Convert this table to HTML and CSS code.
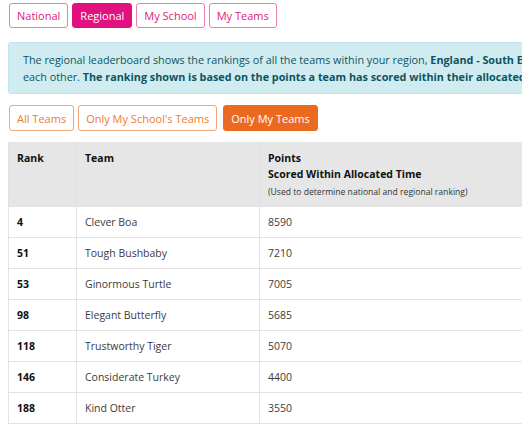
FILE: index.html
```html
<!DOCTYPE html>
<html lang="en">
<head>
<meta charset="utf-8">
<title>Leaderboard</title>
<link rel="stylesheet" href="styles.css">
</head>
<body>
<div class="page">
  <div class="tabs">
    <button class="btn pink">National</button>
    <button class="btn pink active">Regional</button>
    <button class="btn pink">My School</button>
    <button class="btn pink">My Teams</button>
  </div>
  <div class="alert">
    The regional leaderboard shows the rankings of all the teams within your region, <b>England - South East</b>, compared with<br>
    each other. <b>The ranking shown is based on the points a team has scored within their allocated time.</b>
  </div>
  <div class="filters">
    <button class="btn orange">All Teams</button>
    <button class="btn orange">Only My School's Teams</button>
    <button class="btn orange active">Only My Teams</button>
  </div>
  <table class="board">
    <thead>
      <tr>
        <th class="c-rank">Rank</th>
        <th class="c-team">Team</th>
        <th class="c-points">
          <div>Points</div>
          <div>Scored Within Allocated Time</div>
          <div class="note">(Used to determine national and regional ranking)</div>
        </th>
      </tr>
    </thead>
    <tbody>
      <tr><td class="rank">4</td><td>Clever Boa</td><td>8590</td></tr>
      <tr><td class="rank">51</td><td>Tough Bushbaby</td><td>7210</td></tr>
      <tr><td class="rank">53</td><td>Ginormous Turtle</td><td>7005</td></tr>
      <tr><td class="rank">98</td><td>Elegant Butterfly</td><td>5685</td></tr>
      <tr><td class="rank">118</td><td>Trustworthy Tiger</td><td>5070</td></tr>
      <tr><td class="rank">146</td><td>Considerate Turkey</td><td>4400</td></tr>
      <tr><td class="rank">188</td><td>Kind Otter</td><td>3550</td></tr>
    </tbody>
  </table>
</div>
</body>
</html>
```

FILE: styles.css
```css
html, body {
  margin: 0;
  padding: 0;
  overflow: hidden;
  background: #fff;
}
body {
  font-family: "Open Sans", "Noto Sans", sans-serif;
  font-size: 11px;
  color: #212529;
}
.page {
  width: 760px;
  padding: 3px 0 0 8px;
}
.tabs, .filters {
  display: flex;
  gap: 4px;
  padding-left: 1px;
}
.btn {
  font-family: inherit;
  font-size: 11px;
  height: 25px;
  padding: 0 7px;
  background: #fff;
  border-radius: 3px;
  border: 1px solid;
  line-height: 23px;
  cursor: pointer;
}
.btn.pink {
  color: #e0187f;
  border-color: #ee7ab5;
}
.btn.pink.active {
  background: #e2117f;
  border-color: #e2117f;
  color: #fff;
}
.btn.orange {
  color: #ef7a36;
  border-color: #f3a57a;
  height: 26px;
}
.btn.orange.active {
  background: #ec6a20;
  border-color: #ec6a20;
  color: #fff;
  margin-left: 2px;
}
.alert {
  margin-top: 14px;
  background: #d1ecf1;
  border: 1px solid #bee5eb;
  border-radius: 3px;
  color: #0c5460;
  padding: 8px 14px;
  line-height: 17px;
  font-size: 10.8px;
  white-space: nowrap;
}
.alert b {
  font-weight: 700;
}
.filters {
  margin-top: 11px;
}
.board {
  margin-top: 11px;
  border-collapse: collapse;
  width: 760px;
  font-size: 10.5px;
}
.board th, .board td {
  border: 1px solid #e2e2e2;
  text-align: left;
  vertical-align: top;
  padding: 7px 8px;
  line-height: 16px;
}
.board thead th {
  background: #e6e6e6;
  font-weight: 700;
  color: #111;
  padding-top: 8px;
  padding-bottom: 6px;
  border-top: none;
}
.board .note {
  font-weight: 400;
  font-size: 8.6px;
  color: #333;
  margin-top: 2px;
}
.c-rank { width: 51px; }
.c-team { width: 166px; }
.board td {
  color: #3c3c3c;
  height: 16px;
}
.board td.rank {
  font-weight: 700;
  color: #111;
}
```
